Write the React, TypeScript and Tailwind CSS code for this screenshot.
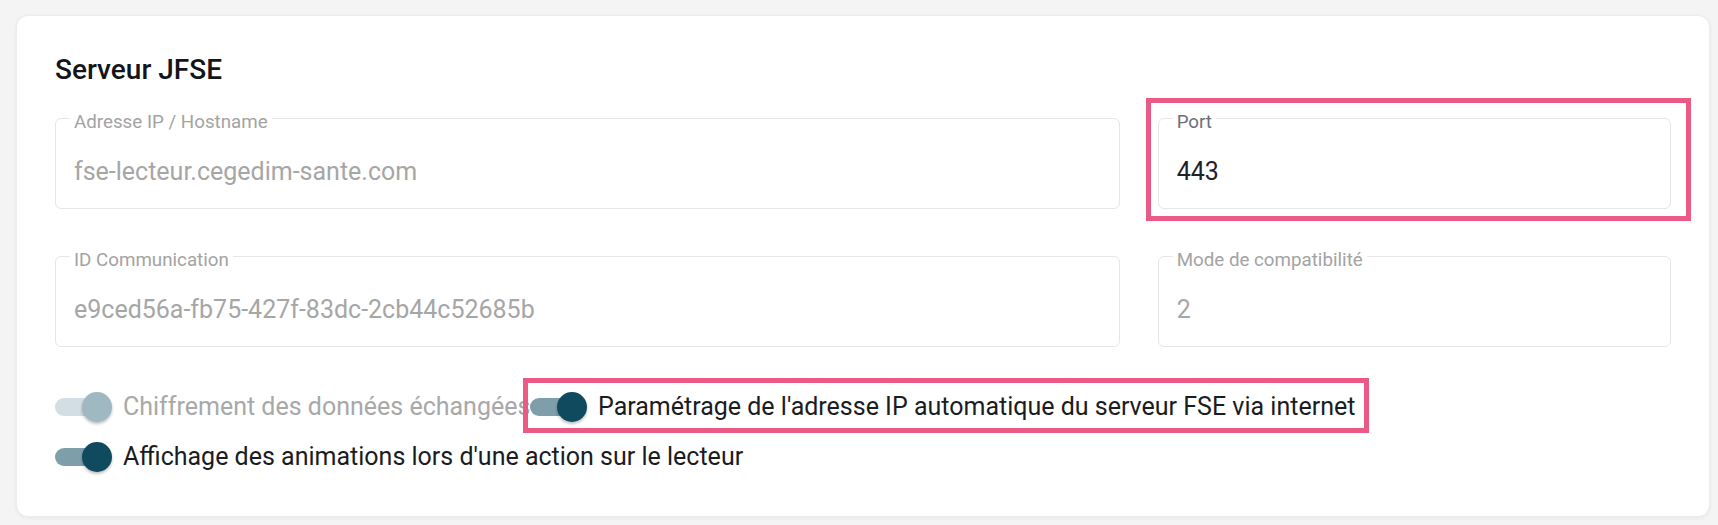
import React from 'react'

type FieldProps = {
  label: string
  value: string
  active?: boolean
  span: string
  highlight?: boolean
}

function Field({ label, value, active, span, highlight }: FieldProps) {
  return (
    <div className={`relative ${span}`}>
      <div className="relative flex h-[91px] items-center rounded-[6px] border border-[#e6e6e6] pl-[18px] pt-[17px]">
        <span className={`absolute left-[14px] top-[3px] -translate-y-1/2 bg-white px-[4px] text-[18.75px] leading-none ${active ? 'text-[#6b7079]' : 'text-[#a3a3a3]'}`}>
          {label}
        </span>
        <span className={`text-[25px] leading-[1.5] ${active ? 'text-[#1f2329]' : 'text-[#a6a6a6]'}`}>{value}</span>
      </div>
      {highlight && (
        <div className="pointer-events-none absolute -bottom-[12px] -left-[12px] -right-[20px] -top-[20px] border-[5px] border-[#ea5a84]" />
      )}
    </div>
  )
}

function Toggle({ disabled }: { disabled?: boolean }) {
  return (
    <span className="relative block h-[30px] w-[57px] shrink-0">
      <span className={`absolute left-0 top-[6px] h-[18px] w-[50px] rounded-full ${disabled ? 'bg-[#d2dee3]' : 'bg-[#7e9ea9]'}`} />
      <span
        className={`absolute right-0 top-0 h-[30px] w-[30px] rounded-full shadow-[0_2px_3px_rgba(0,0,0,0.25)] ${disabled ? 'bg-[#a0b8c1]' : 'bg-[#0f4a5f]'}`}
      />
    </span>
  )
}

function SwitchLabel({ text, disabled }: { text: string; disabled?: boolean }) {
  return (
    <span className="flex items-center gap-[11px] whitespace-nowrap">
      <Toggle disabled={disabled} />
      <span className={`text-[25px] leading-none ${disabled ? 'text-[#a8a8a8]' : 'text-[#1a1c1f]'}`}>{text}</span>
    </span>
  )
}

export default function App() {
  return (
    <div className="min-h-[525px] w-[1718px] bg-[#f4f4f4] pb-[8px] pl-[16px] pr-[8px] pt-[15px]" style={{ fontFamily: 'Roboto, "Liberation Sans", sans-serif' }}>
      <div className="h-[502px] rounded-[12px] border border-[#ececec] bg-white px-[38px] pt-[37px] shadow-[0_1px_4px_rgba(0,0,0,0.06)]">
        <h2 className="mb-[31px] text-[28px] font-medium leading-[1.2] text-[#141518]">Serveur JFSE</h2>

        <div className="grid grid-cols-12 gap-x-[38px] gap-y-[47px]">
          <Field span="col-span-8" label="Adresse IP / Hostname" value="fse-lecteur.cegedim-sante.com" />
          <Field span="col-span-4" label="Port" value="443" active highlight />
          <Field span="col-span-8" label="ID Communication" value="e9ced56a-fb75-427f-83dc-2cb44c52685b" />
          <Field span="col-span-4" label="Mode de compatibilité" value="2" />
        </div>

        <div className="mt-[35px] flex flex-col">
          <div className="flex h-[50px] items-center">
            <div className="w-[475px]">
              <SwitchLabel text="Chiffrement des données échangées" disabled />
            </div>
            <div className="relative">
              <SwitchLabel text="Paramétrage de l'adresse IP automatique du serveur FSE via internet" />
              <div className="pointer-events-none absolute -bottom-[11px] -left-[7px] -right-[14px] -top-[14px] border-[5px] border-[#ea5a84]" />
            </div>
          </div>
          <div className="flex h-[50px] items-center">
            <SwitchLabel text="Affichage des animations lors d'une action sur le lecteur" />
          </div>
        </div>
      </div>
    </div>
  )
}
